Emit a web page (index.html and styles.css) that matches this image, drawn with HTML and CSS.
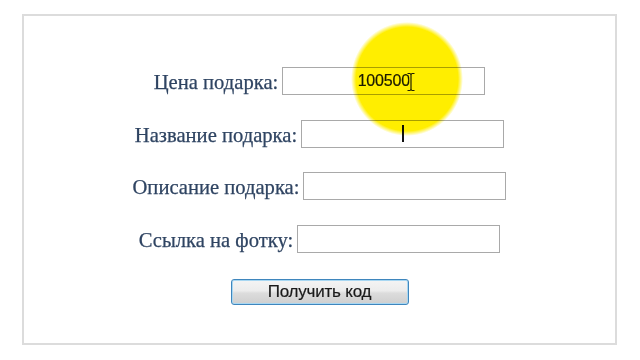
FILE: index.html
```html
<!DOCTYPE html>
<html lang="ru">
<head>
<meta charset="utf-8">
<title>Код подарка</title>
<link rel="stylesheet" href="styles.css">
</head>
<body>
<div class="frame">
  <form class="gift-form">
    <div class="row">
      <label class="label" for="price">Цена подарка:</label>
      <span class="field">
        <input class="input input-value" id="price" type="text" value="100500">
        <svg class="ibeam" width="10" height="20" viewBox="0 0 10 20" aria-hidden="true">
          <path d="M1.5 1.5h2.5M6 1.5h2.5M5 2v16M1.5 18.5h2.5M6 18.5h2.5" stroke="#fff" stroke-width="3" fill="none"/>
          <path d="M1.5 1.5h2.5M6 1.5h2.5M5 2v16M1.5 18.5h2.5M6 18.5h2.5" stroke="#222" stroke-width="1.2" fill="none"/>
          <path d="M4 1.5q1 0 1 1M6 1.5q-1 0-1 1M4 18.5q1 0 1-1M6 18.5q-1 0-1-1" stroke="#222" stroke-width="1" fill="none"/>
        </svg>
      </span>
    </div>
    <div class="row">
      <label class="label" for="name">Название подарка:</label>
      <span class="field">
        <input class="input" id="name" type="text">
        <span class="caret"></span>
      </span>
    </div>
    <div class="row">
      <label class="label" for="desc">Описание подарка:</label>
      <span class="field"><input class="input" id="desc" type="text"></span>
    </div>
    <div class="row">
      <label class="label" for="photo">Ссылка на фотку:</label>
      <span class="field"><input class="input" id="photo" type="text"></span>
    </div>
    <div class="actions">
      <button class="btn" type="button">Получить код</button>
    </div>
  </form>
  <div class="spotlight"></div>
</div>
</body>
</html>
```

FILE: styles.css
```css
html, body {
  margin: 0;
  padding: 0;
  background: #ffffff;
}

.frame {
  position: relative;
  box-sizing: border-box;
  width: 595px;
  height: 331px;
  margin: 14px 0 0 22px;
  border: 2px solid #dcdcdc;
  background: #ffffff;
}

.gift-form {
  display: flex;
  flex-direction: column;
  align-items: center;
  padding-top: 51px;
  gap: 24.5px;
}

.row {
  display: flex;
  align-items: center;
  gap: 4px;
  height: 28px;
}

.label {
  font-family: "Liberation Serif", "Times New Roman", serif;
  font-size: 20.6px;
  line-height: 28px;
  padding-top: 2px;
  color: #2f4462;
  -webkit-text-stroke: 0.25px #2f4462;
}

.field {
  position: relative;
  display: block;
}

.input {
  display: block;
  box-sizing: border-box;
  width: 203px;
  height: 28px;
  margin: 0;
  padding: 0 4px;
  border: 1px solid #a9a9a9;
  background: #ffffff;
  font-family: "Liberation Sans", Arial, sans-serif;
  font-size: 16px;
  color: #1a1a1a;
  outline: none;
}

.input-value {
  text-align: center;
  letter-spacing: -0.2px;
  -webkit-text-stroke: 0.2px #1a1a1a;
}

.ibeam {
  position: absolute;
  left: 124px;
  top: 5px;
}

.caret {
  position: absolute;
  left: 101px;
  top: 5px;
  width: 2px;
  height: 17px;
  background: #111111;
}

.actions {
  padding-top: 2px;
}

.btn {
  box-sizing: border-box;
  width: 178px;
  height: 26px;
  padding: 0;
  border: 1px solid #3f86bd;
  border-radius: 3px;
  background: linear-gradient(#f4f4f4 0%, #ececec 45%, #dcdcdc 55%, #cfcfcf 100%);
  box-shadow: inset 0 0 0 1px #a8d7f2;
  font-family: "Liberation Sans", Arial, sans-serif;
  font-size: 17px;
  color: #1a1a1a;
  letter-spacing: -0.2px;
  -webkit-text-stroke: 0.2px #1a1a1a;
}

.spotlight {
  position: absolute;
  left: 327px;
  top: 6px;
  width: 112px;
  height: 114px;
  border-radius: 50%;
  background: radial-gradient(closest-side, #ffee00 0%, #ffee00 91%, rgba(255, 238, 0, 0) 100%);
  mix-blend-mode: multiply;
  pointer-events: none;
}
```
